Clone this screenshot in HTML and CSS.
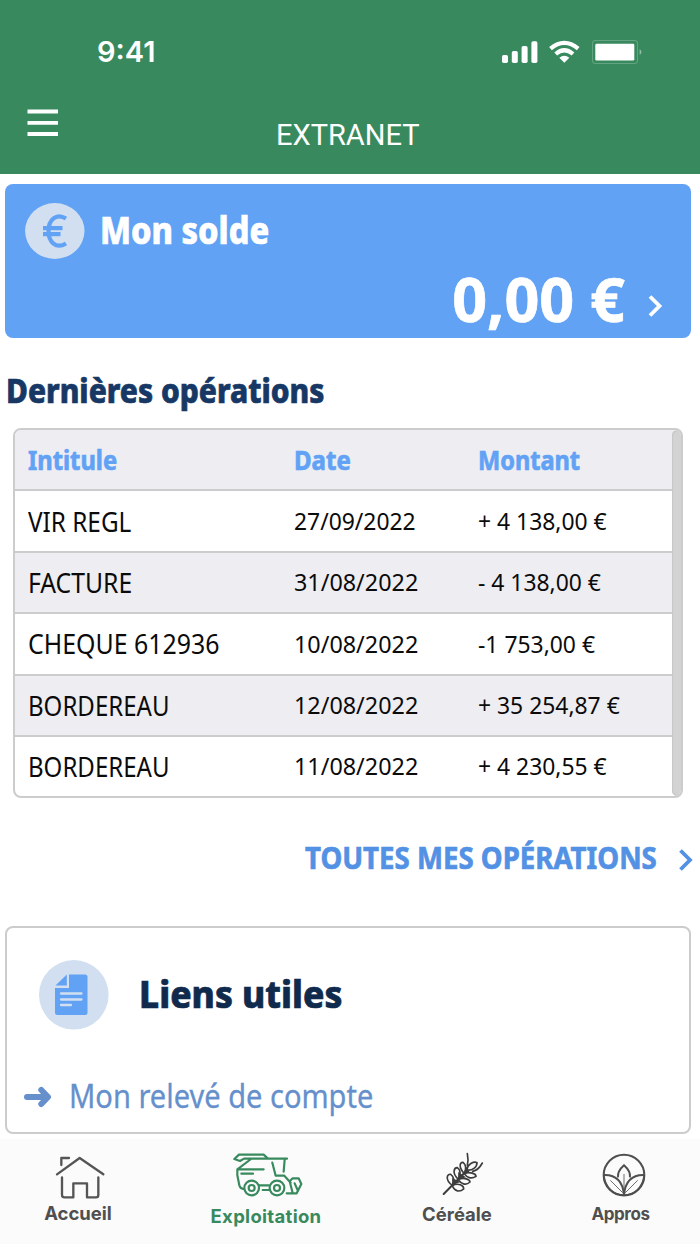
FILE: index.html
```
<!DOCTYPE html>
<html lang="fr">
<head>
<meta charset="utf-8">
<title>Extranet</title>
<link rel="stylesheet" href="styles.css">
</head>
<body>
<header class="header">
  <div class="status">
    <span class="time">9:41</span>
    <svg class="status-icons" width="142" height="26" viewBox="500 39 142 26" fill="#fff">
      <rect x="502" y="55" width="6" height="8" rx="1.7"/><rect x="511.800" y="51" width="6" height="12" rx="1.700"/><rect x="521.600" y="46" width="6" height="17" rx="1.700"/><rect x="531.400" y="41.300" width="6" height="21.700" rx="1.700"/>
      <g fill="none" stroke="#fff" stroke-width="4.200"><path d="M550.500 48.600Q564.300 37 578.200 48.600"/><path d="M555.700 54Q564.300 46.600 573 54"/></g>
      <path d="M559.300 57.800Q564.300 53.700 569.300 57.800L564.300 62.800Z"/>
      <rect x="592.500" y="40.500" width="45" height="23" rx="2.500" fill="none" stroke="#fff" stroke-opacity=".22"/>
      <rect x="595.300" y="43.700" width="39" height="16.800" rx="1.300"/>
      <path d="M639.700 49.300Q643.300 52 639.700 55Z" opacity=".45"/>
    </svg>
  </div>
  <div class="titlebar">
    <svg class="burger" width="31" height="28" viewBox="0 0 31 28" stroke="#fff" stroke-width="3.800"><path d="M.5 2.500H31M.5 13.800H31M.5 25H31"/></svg>
    <h1 class="title">EXTRANET</h1>
  </div>
</header>

<main class="content">
  <section class="balance">
    <div class="balance-head">
      <svg width="60" height="56" viewBox="0 0 60 56"><ellipse cx="29.800" cy="28" rx="29.700" ry="28" fill="#d1dff0"/><path d="M41 15.500C31 9.500 23.500 17 23.500 28S31 46.500 41 40.500M18 25.200H37.500M18 31.200H35.500" fill="none" stroke="#61a2f5" stroke-width="4.200"/></svg>
      <h2 class="balance-title fit heavy">Mon solde</h2>
    </div>
    <div class="balance-row">
      <span class="amount heavy">0,00 €</span>
      <svg width="16" height="24" viewBox="0 0 16 24" fill="none" stroke="#fff" stroke-width="3.800"><path d="M2 2.500 11.500 12 2 21.500"/></svg>
    </div>
  </section>

  <h2 class="section-title"><span class="fit heavy">Dernières opérations</span></h2>

  <div class="table">
    <div class="row head"><span><b class="fit heavy w-int">Intitule</b></span><span><b class="fit heavy w-date">Date</b></span><span><b class="fit heavy w-mont">Montant</b></span></div>
    <div class="row"><span><i class="fit w-vir">VIR REGL</i></span><span class="num"><i class="fit">27/09/2022</i></span><span class="num"><i class="fit">+ 4 138,00 €</i></span></div>
    <div class="row alt"><span><i class="fit w-cap">FACTURE</i></span><span class="num"><i class="fit w-d2">31/08/2022</i></span><span class="num"><i class="fit">- 4 138,00 €</i></span></div>
    <div class="row"><span><i class="fit w-chq">CHEQUE 612936</i></span><span class="num"><i class="fit w-d2">10/08/2022</i></span><span class="num"><i class="fit">-1 753,00 €</i></span></div>
    <div class="row alt"><span><i class="fit w-bord">BORDEREAU</i></span><span class="num"><i class="fit w-d2">12/08/2022</i></span><span class="num"><i class="fit">+ 35 254,87 €</i></span></div>
    <div class="row"><span><i class="fit w-bord">BORDEREAU</i></span><span class="num"><i class="fit w-d2">11/08/2022</i></span><span class="num"><i class="fit">+ 4 230,55 €</i></span></div>
    <div class="scrollbar"></div>
  </div>

  <a class="all-link"><span class="fit heavy">TOUTES MES OPÉRATIONS</span>
    <svg width="16" height="24" viewBox="0 0 16 24" fill="none" stroke="#5291e4" stroke-width="3.800"><path d="M2.500 2.500 12 12 2.500 21.500"/></svg>
  </a>

  <section class="links">
    <div class="links-head">
      <svg width="70" height="70" viewBox="0 0 70 70"><circle cx="34.800" cy="34.800" r="34.800" fill="#d1dff0"/><path d="M30 14.500H46Q48.500 14.500 48.500 17V52.500Q48.500 55 46 55H18.500Q16 55 16 52.500V28H30Z" fill="#61a2f5"/><path d="M27.800 14.500V25.500H16.500Z" fill="#61a2f5"/><path d="M22 33.500H42.500M22 39.500H42.500M22 45H32" stroke="#d1dff0" stroke-width="2.300" stroke-linecap="round"/></svg>
      <h2 class="links-title fit heavy">Liens utiles</h2>
    </div>
    <a class="link-item">
      <svg width="29" height="22" viewBox="0 0 29 22" fill="none" stroke="#6590cc" stroke-width="6" stroke-linecap="round" stroke-linejoin="round"><path d="M3 11H22"/><path d="M17.300 4 24 11 17.300 18"/></svg>
      <span class="fit">Mon relevé de compte</span>
    </a>
  </section>
</main>

<nav class="tabs">
  <a class="tab tab-home">
    <svg width="50" height="45" viewBox="165 75 150 135" fill="none" stroke="#555" stroke-width="7" stroke-linecap="round" stroke-linejoin="round"><path d="M171 133 239 84 310 133M184 105V84H207M186 142V194Q186 202 194 202H220V160H261V202H288Q295 202 295 194V142"/></svg>
    <span>Accueil</span>
  </a>
  <a class="tab tab-combine active">
    <svg width="72" height="45" viewBox="127 65 216 135" fill="none" stroke="#388a5e" stroke-width="6.500" stroke-linecap="round" stroke-linejoin="round"><path d="M292 85H163L151 92 134 86 148 73H222L234 84M184 86 143 117V135L149 165Q153 176 162 176M143 117H222M155 130H190M248 97 258 136H284L303 157M285 87 282 124M208 165H237M219 179H237M291 189H321L335 161 327 144H309L300 153 309 188M315 159 325 182"/><circle cx="186" cy="173" r="22"/><circle cx="186" cy="173" r="9"/><circle cx="262" cy="173" r="22"/><circle cx="262" cy="173" r="9"/></svg>
    <span>Exploitation</span>
  </a>
  <a class="tab tab-grain">
    <svg width="42" height="44" viewBox="158 67 126 132" fill="none" stroke="#3d3d3d" stroke-width="5" stroke-linecap="round"><path d="M163 193 225 130" stroke-width="6"/><path d="M234 72Q238 91 234 107M279 100Q267 122 250 125M189 167C165 149 174 132 184 134Q199 145 189 167ZM207 149C187 130 194 114 204 114Q219 124 207 149ZM225 132C207 113 211 97 221 98Q235 109 225 132ZM189 168C207 158 224 168 223 178C212 188 196 186 189 168ZM207 150C224 141 242 150 242 157C229 169 215 162 207 150ZM225 132C241 125 260 132 260 140C246 150 232 143 225 132ZM233 121C235 102 255 94 263 99C263 113 249 123 233 121Z"/><path d="M191 164V149L207 157ZM209 146V132L224 142ZM226 129 231 117 237 127Z" fill="#3d3d3d"/></svg>
    <span>Céréale</span>
  </a>
  <a class="tab tab-supply">
    <svg width="44" height="44" viewBox="157 67 132 132" fill="none" stroke="#4f4f4f" stroke-width="6"><circle cx="223" cy="133.500" r="61"/><path d="M163 133C199 132 219 152 223 192C227 152 247 132 283 133M205 140C203 124 214 112 223 104C232 112 243 124 241 140"/><path d="M163 135C168 173 193 192 223 193C253 192 278 173 283 135" stroke-width="4"/><path d="M223 130V175M182 149 219 186M264 149 227 186" stroke-width="2.500"/></svg>
    <span>Appros</span>
  </a>
</nav>
</body>
</html>
```
FILE: styles.css
```
* { box-sizing: border-box; }
body {
  margin: 0;
  width: 700px;
  height: 1244px;
  overflow: hidden;
  display: flex;
  flex-direction: column;
  background: #fff;
  font-family: "Noto Sans", "Open Sans", sans-serif;
}
h1, h2 { margin: 0; }
i { font-style: normal; }

/* Condenses text horizontally without changing its height */
.fit {
  display: inline-block;
  white-space: nowrap;
  transform: scaleX(var(--fit, 1));
  transform-origin: left center;
}
.heavy { -webkit-text-stroke: .7px currentColor; }

.header { height: 174px; flex: none; background: #388a5e; color: #fff; }
.status {
  height: 104px;
  padding: 0 58px 0 97px;
  display: flex;
  align-items: center;
  justify-content: space-between;
}
.time { font: 600 29px/36px Inter, sans-serif; }
.titlebar { height: 70px; display: grid; grid-template-columns: 276px 1fr; }
.burger { margin: 5px 0 0 27px; }
.title { font: 400 29px/36px Roboto, sans-serif; margin-top: 13px; }

.content { flex: none; height: 965px; padding: 10px 9px 0 5px; }
.balance {
  height: 154px;
  border-radius: 8px;
  background: #61a2f5;
  color: #fff;
  padding: 19px 27px 0 20px;
}
.balance-head { display: flex; align-items: center; gap: 15px; height: 56px; }
.balance-title { font-size: 37px; font-weight: 800; line-height: 50px; --fit: .88; margin-top: -3px; }
.balance-row { display: flex; justify-content: flex-end; align-items: center; gap: 23px; height: 84px; }
.balance-row svg { margin-top: 10px; }
.amount { font-size: 61px; font-weight: 700; line-height: 80px; margin-top: -4px; }

.section-title {
  margin: 30px 0 0 1px;
  height: 46px;
  font-size: 33px;
  font-weight: 800;
  line-height: 46px;
  color: #173865;
  --fit: .905;
}

.table {
  position: relative;
  width: 670px;
  height: 370px;
  margin: 14px 0 0 8px;
  border: 2px solid #ccc;
  border-radius: 8px;
  overflow: hidden;
  display: grid;
  grid-template-rows: repeat(5, 61.4px) 1fr;
  color: #0b0b0b;
}
.row {
  display: grid;
  grid-template-columns: 266px 183.500px 1fr;
  align-items: center;
  padding-left: 13px;
  font-size: 27px;
  line-height: 40px;
  border-bottom: 2px solid #ccc;
  --fit: .903;
}
.row:nth-child(6) { border-bottom: 0; }
.row.head { color: #61a2f5; background: #eeedf2; }
.row.alt { background: #eeedf2; }
.row > span:first-child { padding-top: 1px; }
.num { font-size: 24px; --fit: .953; }
.w-int { --fit: .88; }
.w-date { --fit: .89; }
.w-mont { --fit: .872; }
.w-vir { --fit: .9; }
.w-cap { --fit: .915; }
.w-chq { --fit: .922; }
.w-bord { --fit: .89; }
.w-d2 { --fit: .973; }
/* Scroll thumb laid over the right edge of the table */
.scrollbar {
  position: absolute;
  top: 0;
  right: -2px;
  bottom: 0;
  width: 11px;
  border-radius: 6px;
  background: #d3d3d3;
  box-shadow: inset 0 0 2px #aaa;
}

.all-link {
  display: grid;
  grid-template-columns: 373px 16px;
  justify-content: end;
  align-items: center;
  margin: 34px -3px 0 0;
  height: 50px;
  font-size: 31px;
  font-weight: 700;
  line-height: 50px;
  color: #5291e4;
  --fit: .891;
}
.all-link svg { margin-top: 6px; }

.links {
  height: 208px;
  margin-top: 44px;
  border: 2px solid #ccc;
  border-radius: 8px;
  padding: 32px 0 0 17px;
}
.links-head { display: flex; align-items: center; gap: 30px; padding-left: 15px; height: 70px; color: #0f2a4c; }
.links-title { font-size: 38px; font-weight: 800; line-height: 50px; --fit: .93; margin-top: -5px; }
.link-item {
  display: flex;
  align-items: center;
  gap: 16px;
  margin-top: 41px;
  height: 50px;
  font-size: 33px;
  line-height: 50px;
  color: #6590cc;
  --fit: .88;
}
.link-item .fit { -webkit-text-stroke: .3px currentColor; }
.link-item svg { margin-top: 2px; }

.tabs {
  height: 105px;
  background: #fbfbfb;
  display: grid;
  grid-template-columns: 156px 220px 162px 162px;
}
.tab {
  display: flex;
  flex-direction: column;
  align-items: center;
  font: 700 18.5px/24px Inter, sans-serif;
  color: #4f4f4f;
}
.tab-home { padding-top: 16px; }
.tab-home svg { flex: none; margin: 0 0 1px 4px; }
.tab-combine { padding-top: 12px; letter-spacing: .3px; }
.tab-combine svg { margin: 1px 0 7px 4px; }
.tab-grain { padding-top: 13px; }
.tab-grain svg { margin: 0 0 6px 12px; }
.tab-supply { padding: 14px 0 0 3px; font-size: 17px; letter-spacing: -.4px; }
.tab-supply svg { margin: 0 0 5px 7px; }
.active { color: #388a5e; }
```
